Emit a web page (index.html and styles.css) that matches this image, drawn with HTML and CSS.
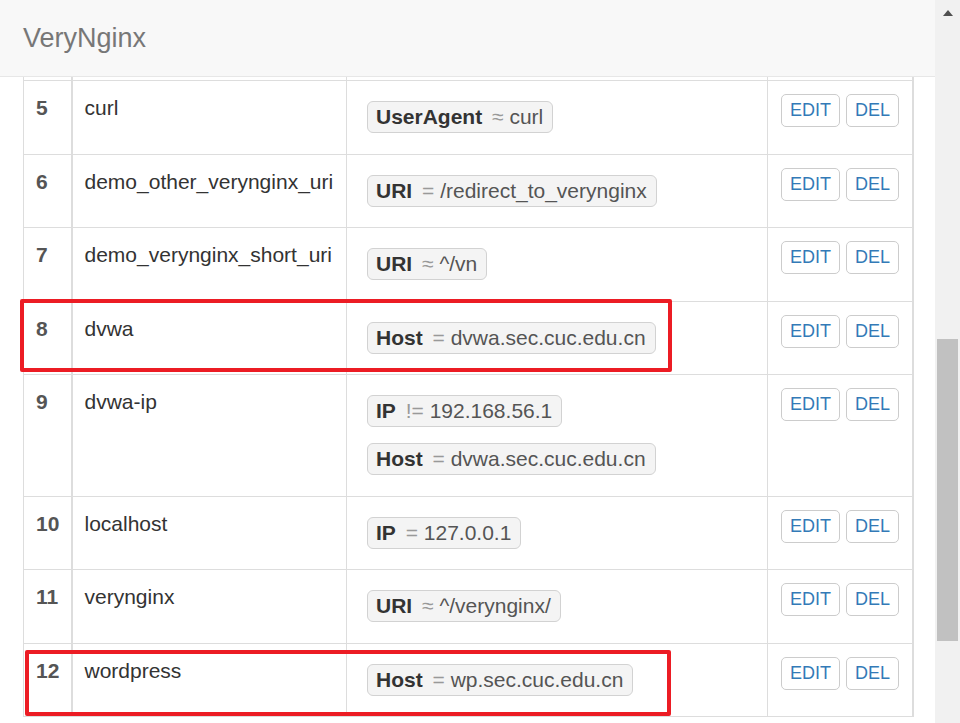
FILE: index.html
```html
<!DOCTYPE html>
<html lang="en">
<head>
<meta charset="utf-8">
<title>VeryNginx</title>
<link rel="stylesheet" href="styles.css">
</head>
<body>
<div class="page">
  <header class="navbar">
    <span class="brand">VeryNginx</span>
  </header>
  <table class="matchers">
    <colgroup>
      <col class="c-num"><col class="c-name"><col class="c-rule"><col class="c-act">
    </colgroup>
    <tbody>
      <tr class="peek"><td></td><td></td><td></td><td></td></tr>
      <tr>
        <td class="num">5</td>
        <td class="name">curl</td>
        <td><div class="rules"><span class="badge"><span class="key">UserAgent</span> <span class="op">≈</span> <span class="val">curl</span></span></div></td>
        <td><div class="acts"><button class="btn">EDIT</button><button class="btn">DEL</button></div></td>
      </tr>
      <tr>
        <td class="num">6</td>
        <td class="name">demo_other_verynginx_uri</td>
        <td><div class="rules"><span class="badge"><span class="key">URI</span> <span class="op">=</span> <span class="val">/redirect_to_verynginx</span></span></div></td>
        <td><div class="acts"><button class="btn">EDIT</button><button class="btn">DEL</button></div></td>
      </tr>
      <tr>
        <td class="num">7</td>
        <td class="name">demo_verynginx_short_uri</td>
        <td><div class="rules"><span class="badge"><span class="key">URI</span> <span class="op">≈</span> <span class="val">^/vn</span></span></div></td>
        <td><div class="acts"><button class="btn">EDIT</button><button class="btn">DEL</button></div></td>
      </tr>
      <tr>
        <td class="num">8</td>
        <td class="name">dvwa</td>
        <td><div class="rules"><span class="badge"><span class="key">Host</span> <span class="op">=</span> <span class="val">dvwa.sec.cuc.edu.cn</span></span></div></td>
        <td><div class="acts"><button class="btn">EDIT</button><button class="btn">DEL</button></div></td>
      </tr>
      <tr>
        <td class="num">9</td>
        <td class="name">dvwa-ip</td>
        <td><div class="rules"><span class="badge"><span class="key">IP</span> <span class="op">!=</span> <span class="val">192.168.56.1</span></span><span class="badge"><span class="key">Host</span> <span class="op">=</span> <span class="val">dvwa.sec.cuc.edu.cn</span></span></div></td>
        <td><div class="acts"><button class="btn">EDIT</button><button class="btn">DEL</button></div></td>
      </tr>
      <tr>
        <td class="num">10</td>
        <td class="name">localhost</td>
        <td><div class="rules"><span class="badge"><span class="key">IP</span> <span class="op">=</span> <span class="val">127.0.0.1</span></span></div></td>
        <td><div class="acts"><button class="btn">EDIT</button><button class="btn">DEL</button></div></td>
      </tr>
      <tr>
        <td class="num">11</td>
        <td class="name">verynginx</td>
        <td><div class="rules"><span class="badge"><span class="key">URI</span> <span class="op">≈</span> <span class="val">^/verynginx/</span></span></div></td>
        <td><div class="acts"><button class="btn">EDIT</button><button class="btn">DEL</button></div></td>
      </tr>
      <tr>
        <td class="num">12</td>
        <td class="name">wordpress</td>
        <td><div class="rules"><span class="badge"><span class="key">Host</span> <span class="op">=</span> <span class="val">wp.sec.cuc.edu.cn</span></span></div></td>
        <td><div class="acts"><button class="btn">EDIT</button><button class="btn">DEL</button></div></td>
      </tr>
    </tbody>
  </table>
  <div class="mark mark-dvwa"></div>
  <div class="mark mark-wp"></div>
</div>
<div class="scrollbar">
  <div class="arrow-zone"><span class="arrow-up"></span></div>
  <div class="thumb"></div>
</div>
</body>
</html>
```

FILE: styles.css
```css
html, body {
  margin: 0;
  padding: 0;
  height: 723px;
  overflow: hidden;
}

body {
  display: flex;
  font-family: "Liberation Sans", Arial, sans-serif;
  font-size: 21px;
  color: #333;
  background: #fff;
}

.page {
  position: relative;
  width: 935px;
  height: 723px;
  overflow: hidden;
  flex: none;
}

.navbar {
  height: 76px;
  background: #f8f8f8;
  border-bottom: 1px solid #e7e7e7;
  padding-left: 23px;
  display: flex;
  align-items: center;
}

.brand {
  font-size: 27px;
  line-height: 30px;
  color: #777;
}

.matchers {
  margin-left: 23px;
  width: 889px;
  border-collapse: collapse;
  table-layout: fixed;
  border-right: 2px solid #ddd;
}

.c-num { width: 48px; }
.c-name { width: 275px; }
.c-rule { width: 421px; }
.c-act { width: 145px; }

.matchers td {
  border: 1px solid #ddd;
  padding: 12px 12px 12.5px;
  vertical-align: top;
  line-height: 30px;
}

.matchers td:first-child {
  border-right-width: 2px;
}

.matchers tr.peek td {
  border-top: none;
  padding: 0;
  height: 3px;
  line-height: 0;
}

.num {
  font-weight: bold;
  color: #555;
}

.name {
  color: #333;
}

.rules {
  display: flex;
  flex-direction: column;
  align-items: flex-start;
  gap: 16px;
  padding: 8px 0 8px 8px;
}

.badge {
  display: inline-block;
  height: 30px;
  line-height: 30px;
  padding: 0 9px 0 8px;
  background: #f4f4f4;
  border: 1px solid #d2d2d2;
  border-radius: 6px;
  white-space: nowrap;
}

.key {
  font-weight: bold;
  color: #333;
  margin-right: 4px;
}

.op {
  color: #999;
}

.val {
  color: #555;
}

.acts {
  display: flex;
  gap: 6px;
  padding-top: 1px;
  padding-left: 1px;
}

.btn {
  height: 33px;
  padding: 0 8px;
  font-family: "Liberation Sans", Arial, sans-serif;
  font-size: 18px;
  line-height: 31px;
  color: #337ab7;
  background: #fff;
  border: 1px solid #ccc;
  border-radius: 5px;
}

.mark {
  position: absolute;
  border: 4px solid #ec1c24;
  border-radius: 2px;
  box-sizing: border-box;
  pointer-events: none;
}

.mark-dvwa {
  left: 20px;
  top: 299px;
  width: 652px;
  height: 73px;
}

.mark-wp {
  left: 25px;
  top: 650px;
  width: 646px;
  height: 66px;
}

.scrollbar {
  width: 25px;
  height: 723px;
  background: #f1f1f1;
  flex: none;
  display: flex;
  flex-direction: column;
  align-items: center;
}

.arrow-zone {
  height: 25px;
  width: 25px;
  display: flex;
  justify-content: center;
  padding-top: 10px;
  box-sizing: border-box;
}

.arrow-up {
  width: 0;
  height: 0;
  border-left: 5.5px solid transparent;
  border-right: 5.5px solid transparent;
  border-bottom: 6px solid #505050;
}

.thumb {
  width: 21px;
  height: 302px;
  margin-top: 314px;
  background: #c1c1c1;
}
```
